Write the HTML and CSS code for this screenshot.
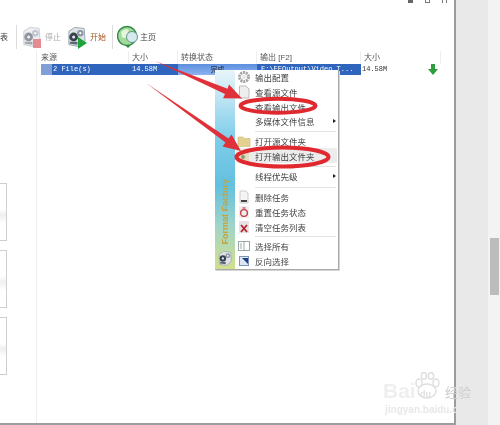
FILE: index.html
```html
<!DOCTYPE html>
<html lang="zh-CN">
<head>
    <meta charset="UTF-8">
    <meta name="viewport" content="width=device-width, initial-scale=1.0">
    <title>Format Factory</title>
    <link rel="stylesheet" href="styles.css">
</head>
<body>
    <svg class="defs" width="0" height="0">
        <symbol id="reel" viewBox="0 0 22 24">
            <path d="M3 6 L9 2 L19 3 L20 16 L13 22 L3 20 Z" fill="#dfe3e8" stroke="#9aa3ad"/>
            <circle cx="8" cy="12" r="4.6" fill="#39424f"/>
            <circle cx="8" cy="12" r="1.6" fill="#e8eaee"/>
            <circle cx="15" cy="8" r="3.4" fill="#8d97a5"/>
            <circle cx="15" cy="8" r="1.2" fill="#fff"/>
            <path d="M4 17 L12 17 L12 20 L4 19 Z" fill="#5b6675"/>
        </symbol>
    </svg>

    <div class="page">
        <div class="window">
            <div class="titlebar">
                <span class="win-btn win-min"></span>
                <span class="win-btn win-max"></span>
                <span class="win-btn win-close"></span>
            </div>

            <div class="toolbar">
                <span class="tool-label cut">表</span>
                <span class="tool-sep"></span>
                <div class="tool tool-stop">
                    <span class="tool-icon">
                        <svg width="21" height="24" viewBox="0 0 21 24"><use href="#reel" class="faded"/><rect x="12" y="14" width="8" height="9" fill="#e58c90"/></svg>
                    </span>
                    <span class="tool-label muted">停止</span>
                </div>
                <div class="tool tool-start">
                    <span class="tool-icon">
                        <svg width="21" height="24" viewBox="0 0 21 24"><use href="#reel"/><path d="M12 12 L21 18 L12 24 Z" fill="#1fa33c"/></svg>
                    </span>
                    <span class="tool-label orange">开始</span>
                </div>
                <span class="tool-sep"></span>
                <div class="tool tool-home">
                    <span class="tool-icon">
                        <svg width="22" height="24" viewBox="0 0 22 24">
                            <circle cx="10" cy="11" r="9.5" fill="#a4d99c" stroke="#2f8a45" stroke-width="1.4"/>
                            <path d="M4 7 Q8 3 12 5 Q9 9 11 12 Q7 14 5 12 Z" fill="#e4f5dd"/>
                            <path d="M8 20 L11 23 L14 20 Z" fill="#2f8a45"/>
                            <circle cx="15" cy="12" r="5.5" fill="#d5e9ee" stroke="#5f9a86"/>
                        </svg>
                    </span>
                    <span class="tool-label">主页</span>
                </div>
            </div>

            <div class="main">
                <div class="side">
                    <div class="side-card"></div>
                    <div class="side-card"></div>
                    <div class="side-card"></div>
                </div>
                <div class="list">
                    <div class="list-head">
                        <span>来源</span>
                        <span>大小</span>
                        <span>转换状态</span>
                        <span>输出 [F2]</span>
                        <span>大小</span>
                    </div>
                    <div class="list-row">
                        <span class="cell cell-source"><i class="thumb"></i>2 File(s)</span>
                        <span class="cell cell-blue">14.58M</span>
                        <span class="cell cell-state">完成</span>
                        <span class="cell cell-blue cell-out">F:\FFOutput\Video_T...</span>
                        <span class="cell cell-size">14.58M
                            <svg class="done" width="10" height="11" viewBox="0 0 10 11"><path d="M3 0 H7 V5 H10 L5 11 L0 5 H3 Z" fill="#2f9e3c"/></svg>
                        </span>
                    </div>
                </div>
            </div>
        </div>

        <div class="gutter"></div>
        <div class="track"><div class="track-thumb"></div></div>
    </div>

    <div class="menu">
        <div class="menu-strip">
            <span class="strip-text">Format Factory</span>
            <svg width="16" height="17" viewBox="0 0 22 24"><use href="#reel"/></svg>
        </div>
        <div class="menu-items">
            <div class="menu-item">
                <svg class="mi" width="14" height="14" viewBox="0 0 14 14"><circle cx="7" cy="7" r="4.5" fill="none" stroke="#a3a3a3" stroke-width="3" stroke-dasharray="2 .8"/><circle cx="7" cy="7" r="2" fill="#e4e4e4"/></svg>
                <span>输出配置</span>
            </div>
            <div class="menu-item">
                <svg class="mi" width="14" height="14" viewBox="0 0 14 14"><path d="M2.5 1 H9 L12 4 V13 H2.5 Z" fill="#eeeeee" stroke="#bbbbbb"/></svg>
                <span>查看源文件</span>
            </div>
            <div class="menu-item">
                <span class="mi"></span>
                <span>查看输出文件</span>
            </div>
            <div class="menu-item has-sub">
                <span class="mi"></span>
                <span>多媒体文件信息</span>
            </div>
            <div class="menu-sep"></div>
            <div class="menu-item">
                <svg class="mi" width="14" height="14" viewBox="0 0 14 14"><path d="M1 3 H6 L7 4.5 H13 V12.5 H1 Z" fill="#e3d190" stroke="#cdb972" stroke-width=".6"/></svg>
                <span>打开源文件夹</span>
            </div>
            <div class="menu-item active">
                <svg class="mi" width="14" height="14" viewBox="0 0 14 14"><path d="M2 4 H12 V12 H2 Z" fill="#e4dcc0"/><circle cx="6" cy="8" r="2" fill="#8a9a78"/></svg>
                <span>打开输出文件夹</span>
            </div>
            <div class="menu-sep wide"></div>
            <div class="menu-item has-sub">
                <span class="mi"></span>
                <span>线程优先级</span>
            </div>
            <div class="menu-sep wide"></div>
            <div class="menu-item">
                <svg class="mi" width="14" height="14" viewBox="0 0 14 14"><path d="M3 1 H9 L11 3 V13 H3 Z" fill="#f4f4f4" stroke="#cccccc"/><rect x="4" y="10" width="6" height="2" fill="#444"/></svg>
                <span>删除任务</span>
            </div>
            <div class="menu-item">
                <svg class="mi" width="14" height="14" viewBox="0 0 14 14"><rect x="2" y="1" width="10" height="12" fill="#f3eeee"/><circle cx="7" cy="8" r="3.4" fill="none" stroke="#c0434a" stroke-width="1.4"/><path d="M5.5 3 H8.5" stroke="#c0434a" stroke-width="1.2"/></svg>
                <span>重置任务状态</span>
            </div>
            <div class="menu-item">
                <svg class="mi" width="14" height="14" viewBox="0 0 14 14"><rect x="2" y="1" width="10" height="12" fill="#e6e2e6"/><path d="M4 5 L10 12 M10 5 L4 12" stroke="#b8242c" stroke-width="1.8"/></svg>
                <span>清空任务列表</span>
            </div>
            <div class="menu-sep"></div>
            <div class="menu-item">
                <svg class="mi" width="14" height="14" viewBox="0 0 14 14"><rect x="1.5" y="2.5" width="11" height="9" fill="#fff" stroke="#9aa7a7"/><path d="M3 5 H5 M3 7 H5 M3 9 H5 M7 2 V12" stroke="#9aa7a7"/></svg>
                <span>选择所有</span>
            </div>
            <div class="menu-item">
                <svg class="mi" width="14" height="14" viewBox="0 0 14 14"><rect x="2.5" y="2.5" width="9" height="9" fill="#dde6f2" stroke="#7f93b5"/><path d="M5 4 H11 V10 Z" fill="#21408a"/></svg>
                <span>反向选择</span>
            </div>
        </div>
    </div>

    <!-- red marks drawn on top of the screenshot -->
    <svg class="marks" width="500" height="425" viewBox="0 0 500 425">
        <path class="mark-fill" d="M155 61 L227.6 88.8 L229 84.6 L242 98.5 L223 98.2 L225 94 Z"/>
        <path class="mark-fill" d="M146 83 L228.5 138.5 L231.5 134.5 L241 151 L222.5 146.5 L225.5 142.5 Z"/>
        <ellipse class="mark-line" cx="278" cy="105.7" rx="37.5" ry="7"/>
        <ellipse class="mark-line" cx="282.5" cy="157" rx="46" ry="9.5"/>
    </svg>

    <div class="watermark">
        <svg class="paw" width="28" height="28" viewBox="0 0 28 28">
            <g fill="none" stroke="#dedede" stroke-width="1.4">
                <ellipse cx="6" cy="11" rx="3" ry="4"/>
                <ellipse cx="11" cy="4" rx="2.6" ry="3.4"/>
                <ellipse cx="18" cy="4" rx="2.6" ry="3.4"/>
                <ellipse cx="23" cy="11" rx="3" ry="4"/>
                <ellipse cx="14" cy="19" rx="9" ry="7"/>
            </g>
        </svg>
        <div class="wm-line">
            <span class="wm-bai">Bai</span>
            <span class="wm-du">du</span>
            <span class="wm-cn">经验</span>
        </div>
        <div class="wm-url">jingyan.baidu.com</div>
    </div>
</body>
</html>
```

FILE: styles.css
```css
body {
    margin: 0;
    width: 500px;
    height: 425px;
    overflow: hidden;
    background: #ffffff;
    color: #444;
    font-family: "Liberation Sans", "Noto Sans CJK SC", sans-serif;
    font-size: 8px;
    filter: blur(0.35px);
}

.defs {
    position: absolute;
}

.page {
    display: flex;
    height: 425px;
}

.window {
    width: 454px;
    height: 423px;
    background: #fff;
    border-right: 2px solid #9c9c9c;
    border-bottom: 2px solid #9c9c9c;
    display: flex;
    flex-direction: column;
    overflow: hidden;
}

.gutter {
    width: 32px;
    background: #e9e9e9;
}

.track {
    width: 12px;
    background: #f3f3f3;
    padding-top: 238px;
}

.track-thumb {
    width: 9px;
    height: 57px;
    margin-left: 2px;
    background: #bcbcbc;
}

/* title bar */
.titlebar {
    height: 24px;
    display: flex;
    justify-content: flex-end;
    gap: 12px;
    padding-right: 7px;
}

.win-btn {
    width: 5px;
    height: 3px;
    box-sizing: border-box;
}

.win-min {
    background: #666;
}

.win-max {
    border: 1px solid #777;
    border-top: none;
}

.win-close {
    border-left: 1px solid #777;
    border-right: 1px solid #777;
}

/* toolbar */
.toolbar {
    height: 25px;
    display: flex;
    align-items: center;
    font-size: 8px;
}

.tool {
    display: flex;
    align-items: center;
    gap: 3px;
}

.tool-stop {
    margin-left: 4px;
    margin-right: 5px;
}

.tool-home {
    margin-left: 4px;
    gap: 1px;
}

.tool-icon {
    display: flex;
}

.tool-label {
    color: #444;
    white-space: nowrap;
}

.tool-label.cut {
    width: 16px;
}

.tool-label.muted {
    color: #aaa;
}

.tool-label.orange {
    color: #a8551c;
}

.tool-sep {
    width: 1px;
    height: 24px;
    background: #dcdcdc;
}

.tool-start {
    margin-right: 6px;
}

.faded {
    opacity: 0.55;
}

/* main area */
.main {
    flex: 1;
    display: flex;
    margin-top: 2px;
}

.side {
    width: 36px;
    border-right: 1px solid #eeeeee;
    padding-top: 132px;
    display: flex;
    flex-direction: column;
    gap: 9px;
}

.side-card {
    width: 6px;
    height: 56px;
    border: 1px solid #cfcfcf;
    border-left: none;
    background: linear-gradient(#fff 45%, #efefef 55%, #fff 70%);
}

.list {
    flex: 1;
}

.list-head,
.list-row {
    display: grid;
    grid-template-columns: 92px 49px 79px 104px 80px;
}

.list-head {
    height: 13px;
    align-items: center;
    line-height: 13px;
}

.list-head span {
    padding-left: 3px;
    border-right: 1px solid #eeeeee;
    color: #555;
}

.list-head span:first-child {
    padding-left: 4px;
}

.list-row {
    height: 11px;
    line-height: 11px;
    font-family: "Liberation Mono", "Noto Sans CJK SC", monospace;
    font-size: 7px;
    color: #fff;
}

.cell {
    white-space: nowrap;
    overflow: hidden;
    padding-left: 3px;
}

.cell-source {
    margin-left: 4px;
    display: flex;
    padding-left: 0;
    background: #2f65bc;
}

.thumb {
    width: 11px;
    margin-right: 1px;
    background: #7f9fd6;
}

.cell-blue {
    background: #2f65bc;
}

.cell-state {
    background: linear-gradient(#5d8fe0, #8ab3ef);
    color: #222;
    text-align: center;
    padding-left: 0;
    font-family: "Noto Sans CJK SC", sans-serif;
}

.cell-out {
    padding-left: 4px;
}

.cell-size {
    color: #333;
    padding-left: 1px;
    display: flex;
    justify-content: space-between;
    align-items: center;
}

.done {
    margin-right: 3px;
}

/* context menu */
.menu {
    position: absolute;
    left: 215px;
    top: 70px;
    width: 123px;
    display: flex;
    background: #fff;
    border-right: 1px solid #a9a9a9;
    border-bottom: 1px solid #a9a9a9;
    box-shadow: 1px 1px 0 #d5d5d5;
}

.menu-strip {
    width: 20px;
    flex-shrink: 0;
    display: flex;
    flex-direction: column;
    align-items: center;
    justify-content: flex-end;
    gap: 4px;
    padding-bottom: 2px;
    box-sizing: border-box;
    background: linear-gradient(#e9f5f9 0%, #7cccea 35%, #63c0de 58%, #9ed4c8 78%, #d2e08c 100%);
}

.strip-text {
    writing-mode: vertical-rl;
    transform: rotate(180deg);
    color: #c4a43e;
    font-size: 9px;
    font-weight: bold;
    margin-bottom: 2px;
}

.menu-items {
    flex: 1;
    padding: 0 1px 1px 1px;
}

.menu-item {
    height: 14.7px;
    display: flex;
    align-items: center;
    font-family: "Noto Sans CJK SC", sans-serif;
    font-size: 8.5px;
    color: #444;
    position: relative;
    white-space: nowrap;
}

.menu-item.active {
    background: #ececec;
}

.menu-item.has-sub::after {
    content: "";
    position: absolute;
    right: 1px;
    top: 5px;
    border-left: 3px solid #222;
    border-top: 2.5px solid transparent;
    border-bottom: 2.5px solid transparent;
}

.mi {
    width: 14px;
    margin-left: 1px;
    margin-right: 4px;
    flex-shrink: 0;
}

.menu-sep {
    height: 1px;
    margin: 2px 1px 2px 19px;
    background: #e2e2e2;
}

.menu-sep.wide {
    margin-top: 3px;
}

/* annotations */
.marks {
    position: absolute;
    left: 0;
    top: 0;
}

.mark-fill {
    fill: #e0313a;
}

.mark-line {
    fill: none;
    stroke: #e0282f;
    stroke-width: 4;
}

/* watermark */
.watermark {
    position: absolute;
    left: 383px;
    top: 372px;
    width: 92px;
}

.paw {
    position: absolute;
    left: 30px;
    top: 0;
}

.wm-line {
    display: flex;
    align-items: flex-end;
    padding-top: 9px;
    height: 20px;
}

.wm-bai {
    font-size: 21px;
    line-height: 20px;
    font-weight: bold;
    color: #efefef;
    width: 37px;
}

.wm-du {
    font-size: 9px;
    font-weight: bold;
    color: #e0e0e0;
    width: 25px;
    line-height: 14px;
}

.wm-cn {
    font-family: "Noto Sans CJK SC", sans-serif;
    font-size: 13px;
    line-height: 18px;
    color: #cfcfcf;
}

.wm-url {
    font-size: 10px;
    font-weight: bold;
    line-height: 12px;
    color: #e8e8e8;
    margin: 3px 0 0 2px;
    white-space: nowrap;
}
```
